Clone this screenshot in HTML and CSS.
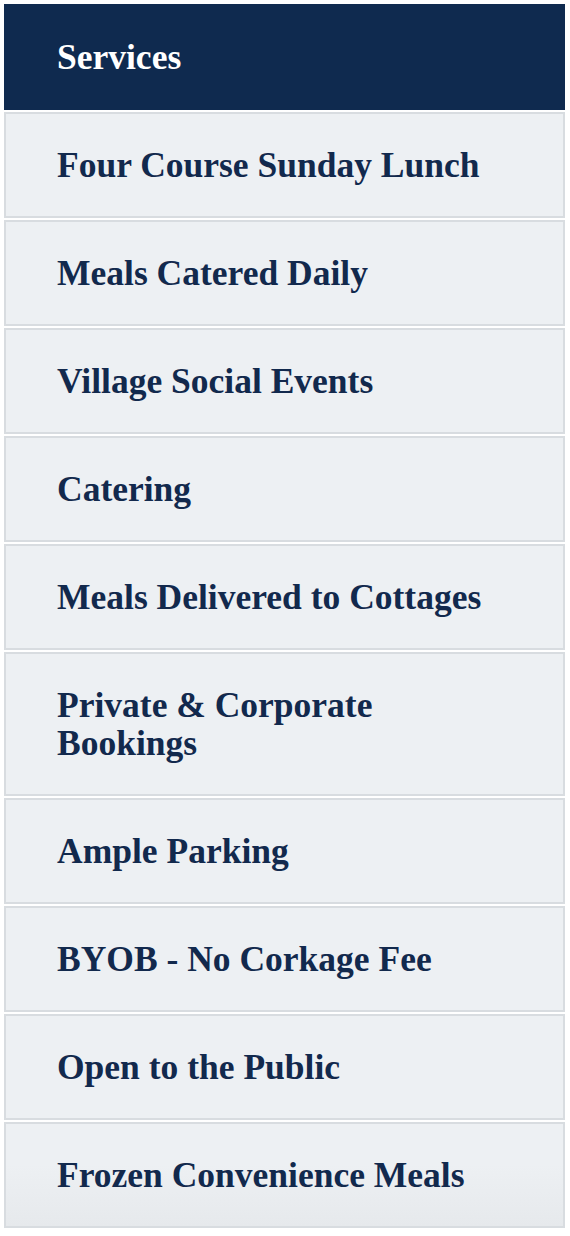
FILE: index.html
```html
<!DOCTYPE html>
<html lang="en">
<head>
    <meta charset="UTF-8">
    <meta name="viewport" content="width=device-width, initial-scale=1.0">
    <title>Services</title>
    <link rel="stylesheet" href="styles.css">
</head>
<body>
    <div class="services">
        <h2 class="servicesTitle">Services</h2>
        <ul class="serviceList">
            <li class="serviceItem">Four Course Sunday Lunch</li>
            <li class="serviceItem">Meals Catered Daily</li>
            <li class="serviceItem">Village Social Events</li>
            <li class="serviceItem">Catering</li>
            <li class="serviceItem">Meals Delivered to Cottages</li>
            <li class="serviceItem">Private &amp; Corporate Bookings</li>
            <li class="serviceItem">Ample Parking</li>
            <li class="serviceItem">BYOB - No Corkage Fee</li>
            <li class="serviceItem">Open to the Public</li>
            <li class="serviceItem">Frozen Convenience Meals</li>
        </ul>
    </div>
</body>
</html>
```

FILE: styles.css
```css
body {
    margin: 0;
    padding: 4px;
    background-color: white;
    font-family: "Liberation Serif", "Times New Roman", serif;
}

.services {
    width: 561px;
}

.servicesTitle {
    margin: 0 0 2px 0;
    height: 106px;
    box-sizing: border-box;
    padding: 0 53px;
    display: flex;
    align-items: center;
    background-color: #0f2a4f;
    color: white;
    font-size: 35.5px;
    font-weight: bold;
}

.serviceList {
    list-style-type: none;
    margin: 0;
    padding: 0;
    display: flex;
    flex-direction: column;
    gap: 2px;
}

.serviceItem {
    padding: 32px 60px 32px 51px;
    border: 2px solid #d8dce0;
    background-color: #edf0f3;
    color: #12294d;
    font-size: 35.5px;
    line-height: 38px;
    font-weight: bold;
}

.serviceItem:last-child {
    background: linear-gradient(#edf0f3 40%, #e6e9ec);
}
```
